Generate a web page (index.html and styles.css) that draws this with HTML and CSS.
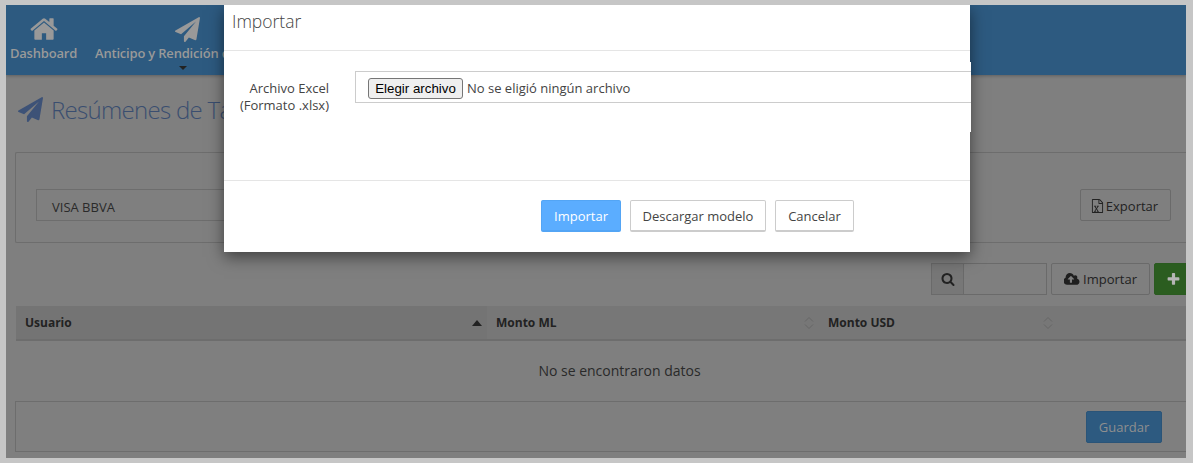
FILE: index.html
```html
<!DOCTYPE html>
<html lang="es">
<head>
<meta charset="utf-8">
<title>Resúmenes de Tarjeta</title>
<link rel="stylesheet" href="styles.css">
</head>
<body>
<div class="frame">
  <header class="nav">
    <a class="nav-item dash">
      <svg class="icon-home" width="30" height="30" viewBox="0 0 1792 1792"><path fill="#999" d="M1472 992v480q0 26-19 45t-45 19h-384v-384h-256v384h-384q-26 0-45-19t-19-45v-480q0-1 .5-3t.5-3l575-474 575 474q1 2 1 6zm223-69l-62 74q-8 9-21 11h-3q-13 0-21-7l-692-577-692 577q-12 8-24 7-13-2-21-11l-62-74q-8-10-7-23.500t11-21.500l719-599q32-26 76-26t76 26l244 204v-195q0-14 9-23t23-9h192q14 0 23 9t9 23v408l219 182q10 8 11 21.500t-7 23.500z"/></svg>
      <span>Dashboard</span>
    </a>
    <a class="nav-item ant">
      <svg class="icon-plane" width="25" height="25" viewBox="0 0 1792 1792"><path fill="#999" d="M1764 11q33 24 27 64l-256 1536q-5 29-32 45-14 8-31 8-11 0-24-5l-453-185-242 295q-18 23-49 23-13 0-22-4-19-7-30.500-23.500t-11.500-36.500v-349l864-1059-1069 925-395-162q-37-14-40-55-2-40 32-59l1664-960q15-9 32-9t36 11z"/></svg>
      <span>Anticipo y Rendición de Gastos</span>
      <i class="caret"></i>
    </a>
  </header>
  <main class="content">
    <h1 class="title">
      <svg width="25" height="25" viewBox="0 0 1792 1792"><path fill="#3d5277" d="M1764 11q33 24 27 64l-256 1536q-5 29-32 45-14 8-31 8-11 0-24-5l-453-185-242 295q-18 23-49 23-13 0-22-4-19-7-30.500-23.500t-11.500-36.500v-349l864-1059-1069 925-395-162q-37-14-40-55-2-40 32-59l1664-960q15-9 32-9t36 11z"/></svg>
      <span>Resúmenes de Tarjeta</span>
    </h1>
    <section class="filter">
      <div class="select">VISA BBVA</div>
      <button class="btn export">
        <svg width="13" height="14" viewBox="0 0 1792 1792" preserveAspectRatio="none"><path fill="#222" d="M1596 380q28 28 48 76t20 88v1152q0 40-28 68t-68 28h-1344q-40 0-68-28t-28-68v-1600q0-40 28-68t68-28h896q40 0 88 20t76 48zm-444-244v376h376q-10-29-22-41l-313-313q-12-12-41-22zm384 1528v-1024h-416q-40 0-68-28t-28-68v-416h-768v1536h1280zm-1128-141v106h281v-106h-75l103-161q5-7 10-16.500t7.500-13.500 3.500-4h2q1 4 5 10 2 4 4.500 7.500t6 8 6.500 8.500l107 161h-76v106h291v-106h-68l-192-273 195-282h67v-107h-279v107h74l-103 159q-4 7-10 16.500t-9 13.500l-2 3h-2q-1-4-5-10-6-11-17-23l-102-159h76v-107h-290v107h68l189 272-194 283h-68z"/></svg>
        Exportar
      </button>
    </section>
    <div class="tools">
      <div class="search">
        <span class="addon"><svg width="14" height="14" viewBox="0 0 1792 1792"><path fill="#222" d="M1216 832q0-185-131.500-316.500t-316.500-131.500-316.500 131.500-131.500 316.500 131.500 316.500 316.500 131.500 316.500-131.500 131.500-316.500zm512 832q0 52-38 90t-90 38q-54 0-90-38l-343-342q-179 124-399 124-143 0-273.500-55.500t-225-150-150-225-55.500-273.500 55.500-273.500 150-225 225-150 273.500-55.500 273.500 55.500 225 150 150 225 55.500 273.500q0 220-124 399l343 343q37 37 37 90z"/></svg></span>
        <span class="field"></span>
      </div>
      <button class="btn import">
        <svg width="16" height="15" viewBox="0 0 1920 1792"><path fill="#1f1f1f" d="M1216 864q0-14-9-23l-352-352q-9-9-23-9t-23 9l-351 351q-10 12-10 24 0 14 9 23t23 9h224v352q0 13 9.500 22.500t22.500 9.500h192q13 0 22.500-9.500t9.500-22.500v-352h224q13 0 22.500-9.500t9.500-22.500zm640 288q0 159-112.500 271.500t-271.500 112.500h-1088q-185 0-316.500-131.500t-131.500-316.500q0-130 70-240t188-165q-2-30-2-43 0-212 150-362t362-150q156 0 285.500 87t188.500 231q71-62 166-62 106 0 181 75t75 181q0 76-41 138 130 31 213.500 135.500t83.500 238.500z"/></svg>
        Importar
      </button>
      <button class="btn add"><svg width="15" height="15" viewBox="0 0 1792 1792"><path fill="#b5b5b5" d="M1600 736v192q0 40-28 68t-68 28h-416v416q0 40-28 68t-68 28h-192q-40 0-68-28t-28-68v-416h-416q-40 0-68-28t-28-68v-192q0-40 28-68t68-28h416v-416q0-40 28-68t68-28h192q40 0 68 28t28 68v416h416q40 0 68 28t28 68z"/></svg></button>
    </div>
    <table class="grid">
      <thead>
        <tr>
          <th class="c-user">Usuario<svg class="sort" width="10" height="6" viewBox="0 0 10 6"><path fill="#222" d="M5 0L10 6H0Z"/></svg></th>
          <th class="c-ml">Monto ML<svg class="sort" width="10" height="14" viewBox="0 0 10 14"><path fill="none" stroke="#666" d="M1 5.500L5 1.500L9 5.500M1 8.500L5 12.500L9 8.500"/></svg></th>
          <th class="c-usd">Monto USD<svg class="sort" width="10" height="14" viewBox="0 0 10 14"><path fill="none" stroke="#666" d="M1 5.500L5 1.500L9 5.500M1 8.500L5 12.500L9 8.500"/></svg></th>
          <th class="c-end"></th>
        </tr>
      </thead>
      <tbody>
        <tr><td colspan="4">No se encontraron datos</td></tr>
      </tbody>
    </table>
    <footer class="actions"><button class="btn save">Guardar</button></footer>
  </main>
  <div class="modal">
    <h2 class="modal-head">Importar</h2>
    <div class="modal-body">
      <label class="file-label">Archivo Excel<br>(Formato .xlsx)</label>
      <div class="file-col">
        <div class="file-box"><button class="file-btn">Elegir archivo</button><span>No se eligió ningún archivo</span></div>
      </div>
    </div>
    <div class="modal-foot">
      <button class="mbtn primary">Importar</button>
      <button class="mbtn model">Descargar modelo</button>
      <button class="mbtn cancel">Cancelar</button>
    </div>
  </div>
</div>
</body>
</html>
```

FILE: styles.css
```css
* { box-sizing: border-box; }
html, body { margin: 0; height: 100%; }
body {
  background: #c6c6c6;
  padding: 5px 7px 5px 6px;
  font-family: "Open Sans", sans-serif;
  font-size: 13px;
  color: #222;
  overflow: hidden;
}
.frame {
  position: relative;
  height: 453px;
  background: #7f7f7f;
  overflow: hidden;
}
.nav {
  height: 70px;
  background: #2d5a80;
  display: flex;
  box-shadow: 0 1px 3px rgba(0, 0, 0, .25);
}
.nav-item {
  position: relative;
  display: flex;
  flex-direction: column;
  color: #999;
  white-space: nowrap;
  padding-top: 11px;
}
.nav-item span { line-height: 18px; margin-top: 2px; font-weight: 600; letter-spacing: -.2px; }
.dash { width: 71px; margin-left: 2px; align-items: center; }
.icon-home { margin: -2px 0; }
.ant { margin-left: 11px; width: 195px; padding-left: 5px; }
.icon-plane { margin: 1px 0 0 80px; }
.caret {
  position: absolute;
  left: 89px;
  top: 61px;
  border: 4px solid transparent;
  border-top-color: #222;
  border-bottom: 0;
}
.content { padding: 0 0 0 9px; }
.title {
  margin: 21px 0 0;
  display: flex;
  align-items: center;
  gap: 8px;
  height: 26px;
  padding-left: 3px;
  font-size: 24px;
  font-weight: 300;
  letter-spacing: -.7px;
  color: #3a4e70;
  white-space: nowrap;
}
.filter {
  margin-top: 30px;
  height: 91px;
  border: 1px solid #6d6d6d;
  border-right: 0;
  border-radius: 2px 0 0 2px;
  display: flex;
  align-items: center;
  justify-content: space-between;
  padding: 0 15px 0 20px;
}
.select {
  width: 500px;
  height: 32px;
  margin-top: 15px;
  border: 1px solid #6d6d6d;
  padding-left: 15px;
  line-height: 34px;
  color: #2a2a2a;
}
.btn {
  font: inherit;
  color: #222;
  background: #7f7f7f;
  border: 1px solid #6a6a6a;
  border-radius: 2px;
  height: 32px;
  padding: 0 12px;
  display: inline-flex;
  align-items: center;
  justify-content: center;
  gap: 3px;
}
.export { width: 91px; margin-top: 15px; padding: 2px 2px 0 0; gap: 2px; }
.tools {
  margin-top: 20px;
  display: flex;
  justify-content: flex-end;
  gap: 4px;
  height: 32px;
  margin-right: -6px;
}
.search { display: flex; width: 116px; border: 1px solid #6a6a6a; }
.addon {
  width: 32px;
  border-right: 1px solid #6a6a6a;
  background: #777;
  display: flex;
  align-items: center;
  justify-content: center;
}
.field { flex: 1; }
.import { width: 99px; padding: 0; }
.add {
  width: 38px;
  padding: 0;
  background: #2b5d20;
  border-color: #2a5a20;
}
.grid {
  width: 100%;
  margin-top: 11px;
  margin-left: 1px;
  border-collapse: collapse;
  table-layout: fixed;
}
.grid th {
  position: relative;
  height: 34px;
  padding: 0 9px;
  text-align: left;
  font-size: 12px;
  font-weight: 700;
  background: #777;
  border-bottom: 2px solid #6d6d6d;
  color: #222;
}
.sort { position: absolute; right: 5px; top: 50%; transform: translateY(-50%); }
.c-user { width: 471px; background: #747474 !important; }
.c-ml { width: 332px; }
.c-usd { width: 239px; }
.grid td {
  height: 60px;
  text-align: center;
  font-size: 14px;
  padding: 0 0 0 36px;
  color: #2a2a2a;
}
.actions {
  height: 51px;
  margin-top: 1px;
  border: 1px solid #6d6d6d;
  border-right: 0;
  display: flex;
  justify-content: flex-end;
  align-items: flex-start;
  padding: 9px 24px 0 0;
}
.save {
  width: 76px;
  background: #2d5a80;
  border-color: #2a5478;
  color: #8f8f8f;
}
.modal {
  position: absolute;
  left: 218px;
  top: 0;
  width: 746px;
  height: 247px;
  background: #fff;
  box-shadow: 0 5px 15px rgba(0, 0, 0, .5);
  display: flex;
  flex-direction: column;
  color: #444;
}
.modal-head {
  margin: 0;
  height: 46px;
  border-bottom: 1px solid #e5e5e5;
  padding: 5px 8px 0;
  font-size: 17.500px;
  font-weight: 300;
  line-height: 22px;
  color: #444;
}
.modal-body {
  height: 130px;
  display: flex;
  align-items: flex-start;
  padding-top: 11px;
  border-bottom: 1px solid #e5e5e5;
}
.file-label {
  flex: none;
  width: 105px;
  margin-top: 18px;
  text-align: right;
  line-height: 17px;
  font-size: 13px;
}
.file-col {
  flex: none;
  width: 616px;
  height: 70px;
  margin-left: 26px;
  padding-top: 9px;
  background: #fff;
}
.file-box {
  height: 32px;
  border: 1px solid #ccc;
  border-right: 0;
  display: flex;
  align-items: center;
  padding: 2px 0 0 12px;
  font-size: 13px;
  color: #444;
}
.file-btn {
  font-family: "Liberation Sans", sans-serif;
  font-size: 13.300px;
  color: #000;
  background: #efefef;
  border: 1px solid #767676;
  border-radius: 3px;
  height: 21px;
  width: 95px;
  padding: 0;
  margin-right: 4px;
}
.modal-foot {
  flex: 1;
  display: flex;
  align-items: flex-start;
  gap: 9px;
  padding: 19px 0 0 317px;
}
.mbtn {
  font: inherit;
  height: 32px;
  padding: 0;
  background: #fff;
  border: 1px solid #ccc;
  border-bottom-width: 2px;
  border-radius: 2px;
  color: #444;
}
.primary {
  width: 80px;
  background: #5badff;
  border-color: #53a5f5;
  color: #fff;
}
.model { width: 136px; }
.cancel { width: 79px; }
```
